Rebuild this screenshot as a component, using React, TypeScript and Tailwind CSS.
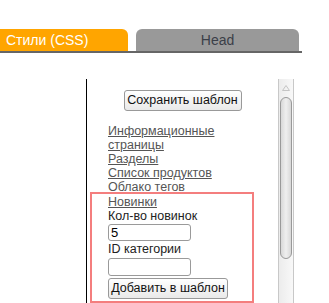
export default function App() {
  const links = ["Информационные страницы", "Разделы", "Список продуктов", "Облако тегов"];

  return (
    <div className="w-[329px] h-[303px] overflow-hidden bg-white font-['Liberation_Sans',Arial,sans-serif]">
      {/* Tabs */}
      <div className="pt-[29px] w-[302px]">
        <div className="flex h-[24px] border-b-2 border-[#666]">
          <div className="w-[128px] h-[22px] bg-[#ffa500] rounded-tr-[6px] pl-[6px] text-[14px] leading-[22px] text-white">
            Стили (CSS)
          </div>
          <div className="ml-[8px] w-[163px] h-[22px] bg-[#999] rounded-t-[6px] text-center text-[14px] leading-[22px] text-[#3b3f48]">
            Head
          </div>
        </div>
      </div>

      {/* Panel */}
      <div className="mt-[26px] ml-[86px] w-[208px] h-[300px] flex border-l border-black">
        <div className="flex-1 pt-[11px]">
          <div className="flex justify-center">
            <button className="h-[21px] w-[118px] whitespace-nowrap rounded-[3px] border border-[#999] bg-gradient-to-b from-white to-[#e9e9e9] text-[12.5px] leading-[19px] text-[#111]">
              Сохранить шаблон
            </button>
          </div>

          <div className="mt-[13px] text-[12.5px] leading-[14px]">
            <div className="pl-[21px] w-[150px]">
              {links.map((l) => (
                <div key={l}>
                  <a href="#" className="text-[#555] underline">
                    {l}
                  </a>
                </div>
              ))}
            </div>

            <div className="ml-[5px] w-[160px] pl-[16px] pt-[1px] pb-[2px] outline-2 outline-[#f47e7e] text-[#222]">
              <div>
                <a href="#" className="text-[#555] underline">
                  Новинки
                </a>
              </div>
              <div className="whitespace-nowrap">Кол-во новинок</div>
              <input
                defaultValue="5"
                className="block my-[1px] w-[83px] h-[17px] px-[2px] rounded-[3px] border border-[#9a9a9a] bg-white text-[13px] text-black outline-none"
              />
              <div className="whitespace-nowrap">ID категории</div>
              <input className="block mt-[2px] w-[83px] h-[18px] px-[2px] rounded-[3px] border border-[#9a9a9a] bg-white text-[13px] outline-none" />
              <button className="mt-[2px] h-[21px] w-[120px] whitespace-nowrap rounded-[3px] border border-[#999] bg-gradient-to-b from-white to-[#e9e9e9] text-[12.5px] leading-[19px] text-[#111]">
                Добавить в шаблон
              </button>
            </div>
            <div className="pl-[21px] text-[#555]">Л</div>
          </div>
        </div>

        {/* Scrollbar */}
        <div className="w-[16px] h-full border-l border-r border-[#c8c8c8] bg-gradient-to-r from-[#ececec] to-[#f8f8f8] flex flex-col items-center">
          <svg width="8" height="6" viewBox="0 0 8 6" className="mt-[6px]">
            <path d="M4 0.5 L7.5 5.5 L0.5 5.5 Z" fill="none" stroke="#c4c4c4" strokeWidth="1" />
          </svg>
          <div className="mt-[6px] w-[12px] h-[162px] rounded-full border border-[#999] bg-gradient-to-r from-[#d8d8d8] via-[#efefef] to-[#d8d8d8]" />
        </div>
      </div>
    </div>
  );
}
